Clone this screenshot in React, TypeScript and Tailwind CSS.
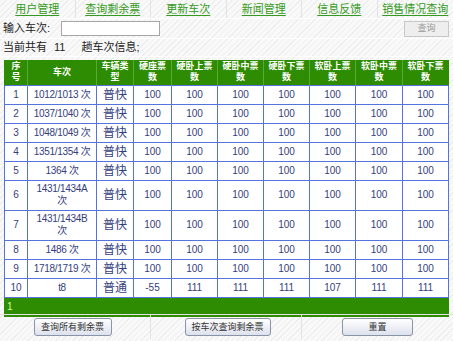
const stripe =
  "bg-[repeating-linear-gradient(135deg,#eeeeee_0px,#eeeeee_1px,#f9f9f9_1px,#f9f9f9_4px)]";

const navItems = ["用户管理", "查询剩余票", "更新车次", "新闻管理", "信息反馈", "销售情况查询"];

const headers: string[][] = [
  ["序", "号"],
  ["车次"],
  ["车辆类", "型"],
  ["硬座票", "数"],
  ["硬卧上票", "数"],
  ["硬卧中票", "数"],
  ["硬卧下票", "数"],
  ["软卧上票", "数"],
  ["软卧中票", "数"],
  ["软卧下票", "数"],
];

type Row = { no: number; train: string[]; type: string; vals: string[]; tall?: boolean };

const hundred = ["100", "100", "100", "100", "100", "100", "100"];

const rows: Row[] = [
  { no: 1, train: ["1012/1013 次"], type: "普快", vals: hundred },
  { no: 2, train: ["1037/1040 次"], type: "普快", vals: hundred },
  { no: 3, train: ["1048/1049 次"], type: "普快", vals: hundred },
  { no: 4, train: ["1351/1354 次"], type: "普快", vals: hundred },
  { no: 5, train: ["1364 次"], type: "普快", vals: hundred },
  { no: 6, train: ["1431/1434A", "次"], type: "普快", vals: hundred, tall: true },
  { no: 7, train: ["1431/1434B", "次"], type: "普快", vals: hundred, tall: true },
  { no: 8, train: ["1486 次"], type: "普快", vals: hundred },
  { no: 9, train: ["1718/1719 次"], type: "普快", vals: hundred },
  { no: 10, train: ["t8"], type: "普通", vals: ["-55", "111", "111", "111", "107", "111", "111"] },
];

const colWidths = [
  "w-[23px]",
  "w-[69px]",
  "w-[37px]",
  "w-[38px]",
  "w-[46px]",
  "w-[46px]",
  "w-[46px]",
  "w-[46px]",
  "w-[47px]",
  "w-[46px]",
];

const cell = "border border-[#5573dc] text-center text-[#34407e] p-0 leading-[12px] overflow-hidden";

function Btn({ label, w }: { label: string; w: string }) {
  return (
    <button
      className={`${w} h-[18px] rounded-[3px] border border-[#8a94a8] bg-[linear-gradient(#ffffff,#dde1ec)] text-[9px] leading-none text-[#333] whitespace-nowrap p-0`}
    >
      {label}
    </button>
  );
}

export default function App() {
  return (
    <div
      className={`w-[453px] h-[341px] overflow-hidden ${stripe} font-['Liberation_Sans','Noto_Sans_CJK_SC',sans-serif] text-[11px] text-[#222]`}
    >
      {/* nav */}
      <div className="grid grid-cols-6 h-[19px] border-b border-white">
        {navItems.map((n, i) => (
          <div
            key={n}
            className={`flex items-center justify-center ${i < 5 ? "border-r border-[#e2e2e2]" : ""}`}
          >
            <span className="text-[#349a22] underline underline-offset-2 leading-none">{n}</span>
          </div>
        ))}
      </div>

      {/* search row */}
      <div className="flex items-center h-[20px] border-b border-white pl-[3px] pr-[4px]">
        <span className="w-[58px] leading-none">输入车次:</span>
        <div className="w-[99px] h-[15px] border border-[#a6a6a6] bg-white" />
        <div className="flex-1" />
        <button className="w-[45px] h-[16px] border border-[#c8c8c8] bg-[#eeeeee] text-[9px] leading-none text-[#9a9a9a] p-0">
          查询
        </button>
      </div>

      {/* count */}
      <div className="flex items-center h-[18px] pl-[3px] border-b border-white leading-none">
        <span>当前共有</span>
        <span className="ml-[7px]">11</span>
        <span className="ml-[16px]">趟车次信息;</span>
      </div>

      {/* table */}
      <div className="pl-[4px] pr-[4px] pt-[3px] h-[257px]">
        <table className="border-collapse table-fixed w-[445px]">
          <colgroup>
            {colWidths.map((w, i) => (
              <col key={i} className={w} />
            ))}
          </colgroup>
          <thead>
            <tr className="h-[25px] bg-[#2e8c02]">
              {headers.map((h, i) => (
                <th
                  key={i}
                  className="border-x border-[#57aa33] first:border-l-[#2e8c02] last:border-r-[#2e8c02] text-white font-bold text-[9px] leading-[11px] p-0 align-middle"
                >
                  {h.map((l, j) => (
                    <div key={j}>{l}</div>
                  ))}
                </th>
              ))}
            </tr>
          </thead>
          <tbody className="bg-white">
            {rows.map((r) => (
              <tr key={r.no} className={r.tall ? "h-[30px]" : "h-[19px]"}>
                <td className={`${cell} text-[10px]`}>{r.no}</td>
                <td className={`${cell} text-[10px] tracking-[-0.3px] whitespace-nowrap`}>
                  {r.train.map((l, j) => (
                    <div key={j}>{l}</div>
                  ))}
                </td>
                <td className={`${cell} text-[12px] text-[#1f2f8a]`}>{r.type}</td>
                {r.vals.map((v, j) => (
                  <td key={j} className={`${cell} text-[10px]`}>
                    {v}
                  </td>
                ))}
              </tr>
            ))}
            <tr className="h-[19px] bg-[#2e8c02]">
              <td colSpan={10} className="border border-[#2e8c02] text-[#ccff88] pl-[2px] p-0 text-[10px] leading-[12px]">
                1
              </td>
            </tr>
          </tbody>
        </table>
      </div>

      {/* buttons */}
      <div className="grid grid-cols-3 h-[25px] border-t border-[#e4e4e4]">
        <div className="flex items-center justify-center border-r border-[#e2e2e2] pr-[5px]">
          <Btn label="查询所有剩余票" w="w-[78px]" />
        </div>
        <div className="flex items-center justify-center border-r border-[#e2e2e2] pl-[3px]">
          <Btn label="按车次查询剩余票" w="w-[86px]" />
        </div>
        <div className="flex items-center justify-center">
          <Btn label="重置" w="w-[71px]" />
        </div>
      </div>
    </div>
  );
}
